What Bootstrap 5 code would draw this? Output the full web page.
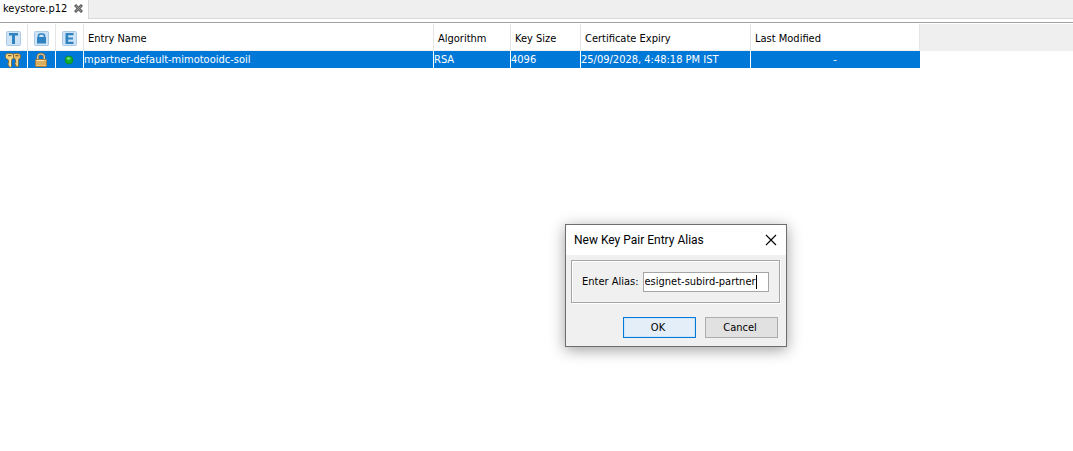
<!DOCTYPE html>
<html lang="en">
<head>
<meta charset="utf-8">
<meta name="viewport" content="width=device-width, initial-scale=1">
<title>keystore.p12</title>
<link href="https://cdn.jsdelivr.net/npm/bootstrap@5.3.0/dist/css/bootstrap.min.css" rel="stylesheet">
<style>
  body { font-family: "DejaVu Sans Condensed", "DejaVu Sans", sans-serif; font-size: 11px; line-height: 16px; color: #000; background: #fff; min-height: 100vh; }
  .tab-strip { height: 19px; }
  .file-tab { width: 88px; padding: 0 4px 2px 3px; color: #000; }
  .tab-close { width: 9px; height: 9px; padding: 0; margin-right: 1px; border: 0; background: none; line-height: 0; }
  .tab-rest { background: #efefef; border: solid #d9d9d9; border-width: 0 0 1px 1px; }
  .entries-pane { margin-top: 3px; padding-top: 1px; border-top: 1px solid #a0a0a0; }
  .entries { table-layout: fixed; width: 100%; border-collapse: separate; border-spacing: 0; }
  .entries th { height: 27px; padding: 3px 0 0 4px; font-weight: 400; white-space: nowrap; border-right: 1px solid #e5e5e5; border-bottom: 1px solid #efefef; }
  .entries td { height: 17px; padding: 0; line-height: 17px; white-space: nowrap; color: #fff; background: #0078d7; border-right: 1px solid #fff; }
  .entries td.last-cell { border-right-color: #0078d7; }
  .entries .icon-cell { padding: 0 2px 0 0; }
  .entries th.icon-cell { padding: 2px 0 0; }
  .entries th.filler { background: #efefef; border: 0; }
  .entries td.filler { background: #fff; border: 0; }
  .entries svg { display: block; margin: 0 auto; }
  .alias-dialog { left: 565px; top: 224px; width: 222px; background: #f0f0f0; border: 1px solid #6e6e6e; box-shadow: 0 3px 14px rgba(0,0,0,.38); }
  .title-bar { height: 30px; padding: 0 9px 0 8px; background: #fff; }
  .title-text { font-family: Roboto, sans-serif; font-size: 12px; line-height: 16px; font-weight: 400; }
  .title-close { width: 12px; height: 12px; padding: 0; border: 0; background: none; line-height: 0; }
  .field-frame { margin: 5px 6px 0 5px; height: 43px; padding: 0 10px; border: 1px solid #a5a5a5; box-shadow: 1px 1px 0 #fff, inset 1px 1px 0 #fff; }
  .alias-input { min-width: 0; height: 20px; padding: 0 1px; border: 1px solid #a5a5a5; border-radius: 0; outline: 0; color: #000; background: linear-gradient(#000, #000) 112px 2px / 1px 14px no-repeat #fff; }
  .dlg-actions { gap: 9px; padding: 14px 8px 8px; }
  .dlg-btn { width: 73px; height: 21px; padding: 0 3px 0 0; border: 1px solid #adadad; background: #e1e1e1; color: #000; line-height: 17px; }
  .dlg-btn.primary { background: #e3eef8; border-color: #0078d7; box-shadow: inset 0 0 0 1px #cfe6f9; }
</style>
</head>
<body class="position-relative overflow-hidden">
<nav class="tab-strip d-flex">
  <div class="file-tab d-flex align-items-center justify-content-between">
    <a href="#" class="text-reset text-decoration-none">keystore.p12</a>
    <button type="button" class="tab-close" aria-label="Close tab">
      <svg width="9" height="9" viewBox="0 0 9 9"><path d="M2 2l5 5M7 2L2 7" stroke="#666" stroke-width="3" stroke-linecap="square"/><path d="M2 2l5 5M7 2L2 7" stroke="#999" stroke-width="1"/></svg>
    </button>
  </div>
  <div class="tab-rest flex-fill"></div>
</nav>

<main class="entries-pane">
<table class="entries">
  <colgroup><col style="width:28px"><col style="width:28px"><col style="width:28px"><col style="width:350px"><col style="width:77px"><col style="width:70px"><col style="width:170px"><col style="width:169px"><col></colgroup>
  <thead><tr>
    <th class="icon-cell" aria-label="Type"><svg width="15" height="15" viewBox="0 0 15 15"><rect x=".5" y=".5" width="14" height="14" rx="1" fill="#cfe3f6" stroke="#a9c9e6"/><path d="M3 2h9v2.500H9V13H6V4.500H3z" fill="#2f83c0"/></svg></th>
    <th class="icon-cell" aria-label="Lock status"><svg width="15" height="15" viewBox="0 0 15 15"><rect x=".5" y=".5" width="14" height="14" rx="1" fill="#cfe3f6" stroke="#a9c9e6"/><path d="M4.500 7V5q0-2 2-2h2q2 0 2 2v2" fill="none" stroke="#2f83c0" stroke-width="1.600"/><rect x="3" y="6" width="9" height="6.500" rx=".5" fill="#2f83c0"/></svg></th>
    <th class="icon-cell" aria-label="Expiry status"><svg width="15" height="15" viewBox="0 0 15 15"><rect x=".5" y=".5" width="14" height="14" rx="1" fill="#cfe3f6" stroke="#a9c9e6"/><path d="M3.500 2h8v2.200h-5.300v2.200H11v2.100H6.200v2.300h5.300V13h-8z" fill="#2f83c0"/></svg></th>
    <th>Entry Name</th><th>Algorithm</th><th>Key Size</th><th>Certificate Expiry</th><th>Last Modified</th><th class="filler"></th>
  </tr></thead>
  <tbody><tr>
    <td class="icon-cell"><svg width="16" height="16" viewBox="0 0 16 16" role="img" aria-label="Key pair"><g stroke="#80622c" stroke-width=".8"><path fill="#e3bd6a" d="M9 1.500h5l1.500 1.500v3l-2 1.500v6.500l-1.200 1L10.500 14v-1.500l-1-.8 1-.8V7.500L8.500 6V2z"/><path fill="#f2d283" d="M2 1.500h5l1.500 1.500v3l-2 2v6.500l-1.300 1L3.500 14v-1.200l-1-.8 1-.8V8L.5 6V3z"/></g><path d="M3 3.700h3.500M10.500 3.700h3" stroke="#80622c" stroke-width="1.300"/><path d="M5.400 7v7M12.300 7v6" stroke="#fff0b5" stroke-width=".8"/></svg></td>
    <td class="icon-cell"><svg width="16" height="16" viewBox="0 0 16 16" role="img" aria-label="Locked"><path d="M4.700 8V5Q4.700 2 8 2t3.300 3v3" fill="none" stroke="#80683a" stroke-width="2.400"/><path d="M4.700 8V5Q4.700 2 8 2t3.300 3v3" fill="none" stroke="#e2d5b0" stroke-width="1.200"/><rect x="2.500" y="7.500" width="11" height="7" rx=".8" fill="#ecc272" stroke="#a47c3c"/><path d="M3 10h10M3 12h10" stroke="#c08f42" stroke-width=".8"/><path d="M4 8.500h7" stroke="#ffe9b0"/></svg></td>
    <td class="icon-cell"><svg width="16" height="16" viewBox="0 0 16 16" role="img" aria-label="Valid"><circle cx="8" cy="8" r="4" fill="#10ad2e" stroke="#0a8a3a" stroke-width="1"/><ellipse cx="7.500" cy="6.500" rx="2" ry="1.400" fill="#63db68"/></svg></td>
    <td>mpartner-default-mimotooidc-soil</td><td>RSA</td><td>4096</td><td>25/09/2028, 4:48:18 PM IST</td><td class="last-cell text-center">-</td><td class="filler"></td>
  </tr></tbody>
</table>
</main>

<section class="alias-dialog position-absolute" role="dialog" aria-labelledby="dlgTitle">
  <header class="title-bar d-flex align-items-center justify-content-between">
    <h1 class="title-text m-0" id="dlgTitle">New Key Pair Entry Alias</h1>
    <button type="button" class="title-close" aria-label="Close"><svg width="12" height="12" viewBox="0 0 12 12"><path d="M1 1l10 10M11 1L1 11" stroke="#000" stroke-width="1.100"/></svg></button>
  </header>
  <form>
    <div class="field-frame d-flex align-items-center">
      <label for="alias" class="text-nowrap me-1">Enter Alias:</label>
      <input type="text" id="alias" class="alias-input flex-fill" value="esignet-subird-partner">
    </div>
    <div class="dlg-actions d-flex justify-content-end">
      <button type="submit" class="dlg-btn primary">OK</button>
      <button type="button" class="dlg-btn">Cancel</button>
    </div>
  </form>
</section>
<script src="https://cdn.jsdelivr.net/npm/bootstrap@5.3.0/dist/js/bootstrap.bundle.min.js"></script>
</body>
</html>
